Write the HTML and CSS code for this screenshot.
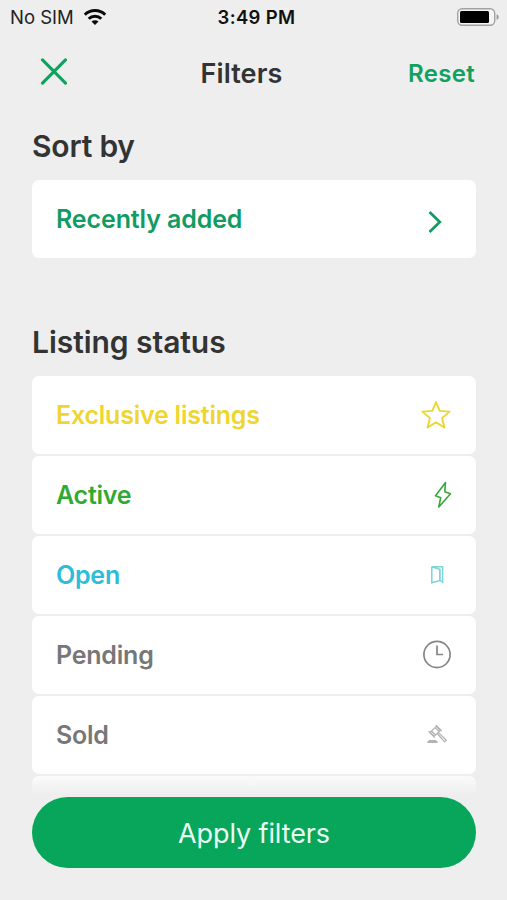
FILE: index.html
```html
<!DOCTYPE html>
<html lang="en">
<head>
<meta charset="utf-8">
<title>Filters</title>
<link rel="stylesheet" href="styles.css">
</head>
<body>
<div class="screen">
  <div class="status">
    <div class="carrier"><span>No SIM</span>
      <svg width="24" height="18" viewBox="0 0 24 18" fill="none" stroke="#0a0a0a" stroke-width="3"><path d="M1.8 6.7a14.5 14.5 0 0 1 20.4 0"/><path d="M5.7 10.8a9 9 0 0 1 12.6 0"/><path d="M8.5 13.6a5 5 0 0 1 7 0L12 17z" fill="#0a0a0a" stroke="none"/></svg>
    </div>
    <span class="time">3:49 PM</span>
    <svg class="battery" width="43" height="18" viewBox="0 0 43 18"><rect x=".7" y=".7" width="37" height="16.6" rx="4.5" fill="#f4f4f4" stroke="#a2a2a2" stroke-width="1.4"/><rect x="3" y="3" width="29" height="12" rx="1.5" fill="#000"/><path d="M39.6 6.2c2.8.8 2.8 4.8 0 5.6z" fill="#999"/></svg>
  </div>
  <header class="nav">
    <svg class="close" width="28" height="28" viewBox="0 0 28 28" fill="none" stroke="#0fa25e" stroke-width="3.1" stroke-linecap="round"><path d="M2.5 1.8l23 23.4M25.5 1.8l-23 23.4"/></svg>
    <h1 class="title">Filters</h1>
    <span class="reset">Reset</span>
  </header>
  <main class="content">
    <h2 class="heading sort-heading">Sort by</h2>
    <div class="row sort"><span class="label recent">Recently added</span>
      <svg class="chevron" width="14" height="24" viewBox="0 0 14 24" fill="none" stroke="#129a64" stroke-width="2.7"><path d="M1.5 2l10.3 10L1.5 22"/></svg>
    </div>
    <h2 class="heading status-heading">Listing status</h2>
    <div class="list">
      <div class="row exclusive"><span class="label">Exclusive listings</span>
        <svg width="30" height="30" viewBox="0 0 30 30" fill="none" stroke="#edd62f" stroke-width="1.9" stroke-linejoin="round"><path d="M15 2l3.7 8.9 9.9.7-7.6 6.5 2.4 9.4-8.4-5.1-8.4 5.1 2.4-9.4-7.6-6.5 9.9-.7z"/></svg>
      </div>
      <div class="row active"><span class="label">Active</span>
        <svg width="18" height="28" viewBox="0 0 18 28" fill="none" stroke="#35a83a" stroke-width="1.6" stroke-linejoin="round"><path d="M11.5 1.5L1.5 14.7l5.2 2L4.8 26 16.5 12.8l-5.7-2z"/></svg>
      </div>
      <div class="row open"><span class="label">Open</span>
        <svg width="14" height="20" viewBox="0 0 14 20" fill="none" stroke="#7dd3d8" stroke-width="1.5"><path d="M1.8 1.8h10.8v16.4M1.8 1.8v16l8-2.2V4.4l-8-2.6M10 4v12M10.5 16.2h2"/></svg>
      </div>
      <div class="row pending"><span class="label">Pending</span>
        <svg width="30" height="30" viewBox="0 0 30 30" fill="none" stroke="#858585" stroke-width="1.7"><circle cx="15" cy="14.5" r="13.1"/><path d="M15 5.5v9h6"/></svg>
      </div>
      <div class="row sold"><span class="label">Sold</span>
        <svg width="20" height="20" viewBox="0 0 20 20" fill="none" stroke="#b3b3b3" stroke-width="1.3" stroke-linejoin="round"><path d="M3.2 7.2L9.2 1.4l4 4.2-6 5.8zM1.6 6.3l6.2 6.3M8.8 0l5.8 6M10.4 8.7l7.2 8.2 1.7-1.6-7.8-7.7M4.5 6l4 4M8 2.6l4 4"/><path d="M.3 18v-1.2l2-1.9h6.4l2 1.9V18z" fill="#b3b3b3" stroke="none"/></svg>
      </div>
      <div class="row next"></div>
    </div>
  </main>
  <footer class="footer"><button class="apply"><span>Apply filters</span></button></footer>
</div>
</body>
</html>
```
FILE: styles.css
```css
* { box-sizing: border-box; margin: 0; padding: 0; }
body { background: #eee; font-family: Inter, "Liberation Sans", sans-serif; }
svg { display: block; flex: none; }
.screen { width: 507px; height: 900px; overflow: hidden; background: #eee; display: flex; flex-direction: column; position: relative; }
.status { height: 34px; display: grid; grid-template-columns: 1fr auto 1fr; align-items: center; padding: 0 7px 0 10px; color: #111; }
.carrier { display: flex; align-items: center; gap: 9px; font-size: 18.5px; color: #222; letter-spacing: 0; }
.carrier svg { margin-top: -1px; }
.time { font-size: 18.5px; font-weight: 600; letter-spacing: .35px; margin: 0 -1.5px 0 1.5px; }
.battery { justify-self: end; }
.nav { height: 80px; display: grid; grid-template-columns: 161px 1fr auto; align-items: center; padding: 0 32px 0 40px; color: #333; }
.close { margin-top: -5px; }
.title { font-size: 27px; font-weight: 600; line-height: 34px; margin-left: -.5px; letter-spacing: .1px; }
.reset { margin-top: -1px; color: #12a05f; font-size: 24px; font-weight: 600; letter-spacing: .3px; }
.content { flex: 1; padding: 0 31px 0 32px; }
.heading { height: 66px; line-height: 64px; font-size: 30px; font-weight: 600; color: #333; white-space: nowrap; letter-spacing: -.05px; }
.sort-heading { letter-spacing: -.2px; }
.status-heading { margin-top: 51.5px; }
.row { height: 78px; border-radius: 7px; background: #fff; padding: 0 24px; display: flex; align-items: center; justify-content: space-between; }
.label { font-size: 25px; font-weight: 600; white-space: nowrap; letter-spacing: -.22px; }
.sort { color: #129c62; }
.sort .label { margin-top: -1px; letter-spacing: -.12px; }
.chevron { margin: 6px 10px 0 0; }
.list { display: flex; flex-direction: column; gap: 2px; }
.exclusive { color: #efd52f; }
.exclusive svg { margin-right: 1px; }
.active { color: #30aa31; }
.open { color: #2dbdd9; }
.pending, .sold { color: #777; }
.sold svg { margin-right: 5px; }
.open svg { margin-right: 8px; }
.footer { position: absolute; left: 0; right: 0; bottom: 0; height: 130px; padding: 27px 31px 32px 32px; background: linear-gradient(#eee0, #eee 25px); }
.apply { display: flex; width: 100%; height: 71px; border: 0; border-radius: 36px; background: #08a65b; color: #e9fff3; align-items: center; justify-content: center; padding-top: 4px; font: 400 27px/1.2 Inter, "Liberation Sans", sans-serif; letter-spacing: -.1px; }
```
